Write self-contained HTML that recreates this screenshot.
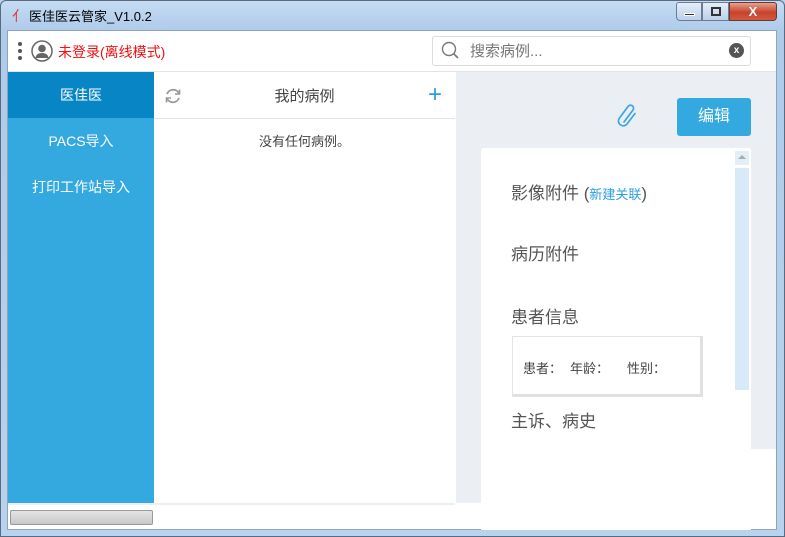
<!DOCTYPE html>
<html><head><meta charset="utf-8"><style>
*{margin:0;padding:0;box-sizing:border-box}
body{width:785px;height:537px;overflow:hidden;position:relative;background:#b9d3ee;font-family:"Liberation Sans","Noto Sans CJK SC",sans-serif}
.a{position:absolute}
.frame{left:0;top:0;width:785px;height:537px;border-radius:6px 6px 0 0;background:linear-gradient(180deg,#c5dcf3 0,#aecbea 30px,#b9d3ee 100%);border:1px solid #5a6b80}
.cjk{font-family:"Liberation Sans","Noto Sans CJK SC",sans-serif}
</style></head><body>
<div class="a frame"></div>
<div class="a" style="left:12px;top:6px;color:#d33;font-size:14px">⺅</div>
<div class="a cjk" style="left:29px;top:6px;font-size:13px;color:#000">医佳医云管家_V1.0.2</div>
<div class="a" style="left:676px;top:2px;width:26px;height:19px;border:1px solid #6a7d95;border-radius:3px 0 0 4px;background:linear-gradient(#e5eef9,#bcd0e8)"><div class="a" style="left:7px;top:10px;width:11px;height:3px;background:#333;border:1px solid #fff"></div></div>
<div class="a" style="left:702px;top:2px;width:27px;height:19px;border:1px solid #6a7d95;background:linear-gradient(#e5eef9,#bcd0e8)"><div class="a" style="left:8px;top:4px;width:10px;height:9px;border:2px solid #333"></div></div>
<div class="a" style="left:729px;top:2px;width:48px;height:19px;border:1px solid #6a3a30;border-radius:0 3px 4px 0;background:linear-gradient(#e8a090,#c7432c 55%,#d25a40);color:#fff;font-weight:bold;font-size:13px;text-align:center;line-height:17px">X</div>
<div class="a" style="left:7px;top:30px;width:770px;height:500px;background:#fff;border:1px solid #8fa3bb"></div>
<div class="a" style="left:8px;top:31px;width:768px;height:41px;background:#fff;border-bottom:1px solid #e2e4e8"></div>
<div class="a" style="left:18px;top:42px;width:4px;height:4px;border-radius:2px;background:#555;box-shadow:0 7px 0 #555,0 14px 0 #555"></div>
<svg class="a" style="left:31px;top:40px" width="22" height="22" viewBox="0 0 22 22"><circle cx="11" cy="11" r="10" fill="#fff" stroke="#666" stroke-width="1.5"/><circle cx="11" cy="8.5" r="3.8" fill="#666"/><path d="M4.5 18 Q5 13 11 13 Q17 13 17.5 18 Z" fill="#666"/></svg>
<div class="a cjk" style="left:58px;top:42px;font-size:14px;color:#f01010">未登录(离线模式)</div>
<div class="a" style="left:432px;top:36px;width:319px;height:30px;border:1px solid #dcdcdc;border-radius:3px;background:#fff"></div>
<svg class="a" style="left:441px;top:41px" width="20" height="20" viewBox="0 0 20 20"><circle cx="8" cy="8" r="6.5" fill="none" stroke="#777" stroke-width="1.4"/><path d="M12.5 12.5 L17 17" stroke="#777" stroke-width="1.6"/></svg>
<div class="a cjk" style="left:470px;top:40px;font-size:15px;color:#777">搜索病例...</div>
<div class="a" style="left:729px;top:43px;width:15px;height:15px;border-radius:8px;background:#555;color:#fff;font-size:10px;font-weight:bold;text-align:center;line-height:15px">x</div>
<div class="a" style="left:8px;top:72px;width:146px;height:431px;background:#33a9e0"></div>
<div class="a cjk" style="left:8px;top:72px;width:146px;height:46px;background:#0885c4;color:#fff;font-size:14px;text-align:center;line-height:46px">医佳医</div>
<div class="a cjk" style="left:8px;top:118px;width:146px;height:46px;color:#fff;font-size:14px;text-align:center;line-height:46px">PACS导入</div>
<div class="a cjk" style="left:8px;top:164px;width:146px;height:46px;color:#fff;font-size:14px;text-align:center;line-height:46px">打印工作站导入</div>
<div class="a" style="left:154px;top:72px;width:301px;height:431px;background:#fff"></div>
<div class="a" style="left:154px;top:118px;width:301px;height:1px;background:#e2e4e8"></div>
<svg class="a" style="left:163px;top:86px" width="20" height="20" viewBox="0 0 20 20"><path d="M4 8 A6.5 6.5 0 0 1 16 7.5" fill="none" stroke="#999" stroke-width="1.8"/><path d="M16 12 A6.5 6.5 0 0 1 4 12.5" fill="none" stroke="#999" stroke-width="1.8"/><path d="M16.5 3.5 L16.5 8 L12 8" fill="none" stroke="#999" stroke-width="1.6"/><path d="M3.5 16.5 L3.5 12 L8 12" fill="none" stroke="#999" stroke-width="1.6"/></svg>
<div class="a cjk" style="left:154px;top:85px;width:301px;text-align:center;font-size:15px;color:#444">我的病例</div>
<div class="a" style="left:428px;top:80px;font-size:24px;color:#2a9ee0;line-height:30px">+</div>
<div class="a cjk" style="left:154px;top:131px;width:301px;text-align:center;font-size:13px;color:#444">没有任何病例。</div>
<div class="a" style="left:8px;top:503px;width:447px;height:2px;background:#eee"></div>
<div class="a" style="left:10px;top:510px;width:143px;height:15px;border:1px solid #999;border-radius:2px;background:linear-gradient(#e4e4e4,#c8c8c8)"></div>
<div class="a" style="left:456px;top:72px;width:320px;height:377px;background:#ebeef3"></div>
<div class="a" style="left:456px;top:449px;width:25px;height:54px;background:#ebeef3"></div>
<svg class="a" style="left:616px;top:102px" width="24" height="26" viewBox="0 0 24 26"><path d="M8 20 L17 8 A3 3 0 0 0 12 4.5 L3.5 16 A4.8 4.8 0 0 0 11 22 L19 11.5" fill="none" stroke="#38a8e0" stroke-width="1.7" stroke-linecap="round"/></svg>
<div class="a cjk" style="left:677px;top:98px;width:74px;height:38px;background:#33a9e0;border-radius:3px;color:#fff;font-size:16px;text-align:center;line-height:38px">编辑</div>
<div class="a" style="left:481px;top:148px;width:270px;height:382px;background:#fff;border-radius:3px 3px 0 0"></div>
<div class="a" style="left:735px;top:151px;width:14px;height:14px;background:#e2eef8"><div class="a" style="left:3px;top:4px;border-left:4px solid transparent;border-right:4px solid transparent;border-bottom:4px solid #aaa"></div></div>
<div class="a" style="left:735px;top:168px;width:14px;height:222px;background:#d6eaf7"></div>
<div class="a cjk" style="left:511px;top:179px;font-size:17px;color:#555">影像附件 (<span style="color:#2a9ee0;font-size:13px">新建关联</span>)</div>
<div class="a cjk" style="left:511px;top:240px;font-size:17px;color:#555">病历附件</div>
<div class="a cjk" style="left:511px;top:303px;font-size:17px;color:#555">患者信息</div>
<div class="a" style="left:512px;top:336px;width:191px;height:61px;border:1px solid #e4e4e4;border-right:3px solid #e0e0e0;border-bottom:3px solid #e0e0e0;background:#fff"></div>
<div class="a cjk" style="left:523px;top:358px;font-size:13px;color:#444">患者：</div>
<div class="a cjk" style="left:570px;top:358px;font-size:13px;color:#444">年龄：</div>
<div class="a cjk" style="left:627px;top:358px;font-size:13px;color:#444">性别：</div>
<div class="a cjk" style="left:511px;top:407px;font-size:17px;color:#555">主诉、病史</div>
</body></html>
